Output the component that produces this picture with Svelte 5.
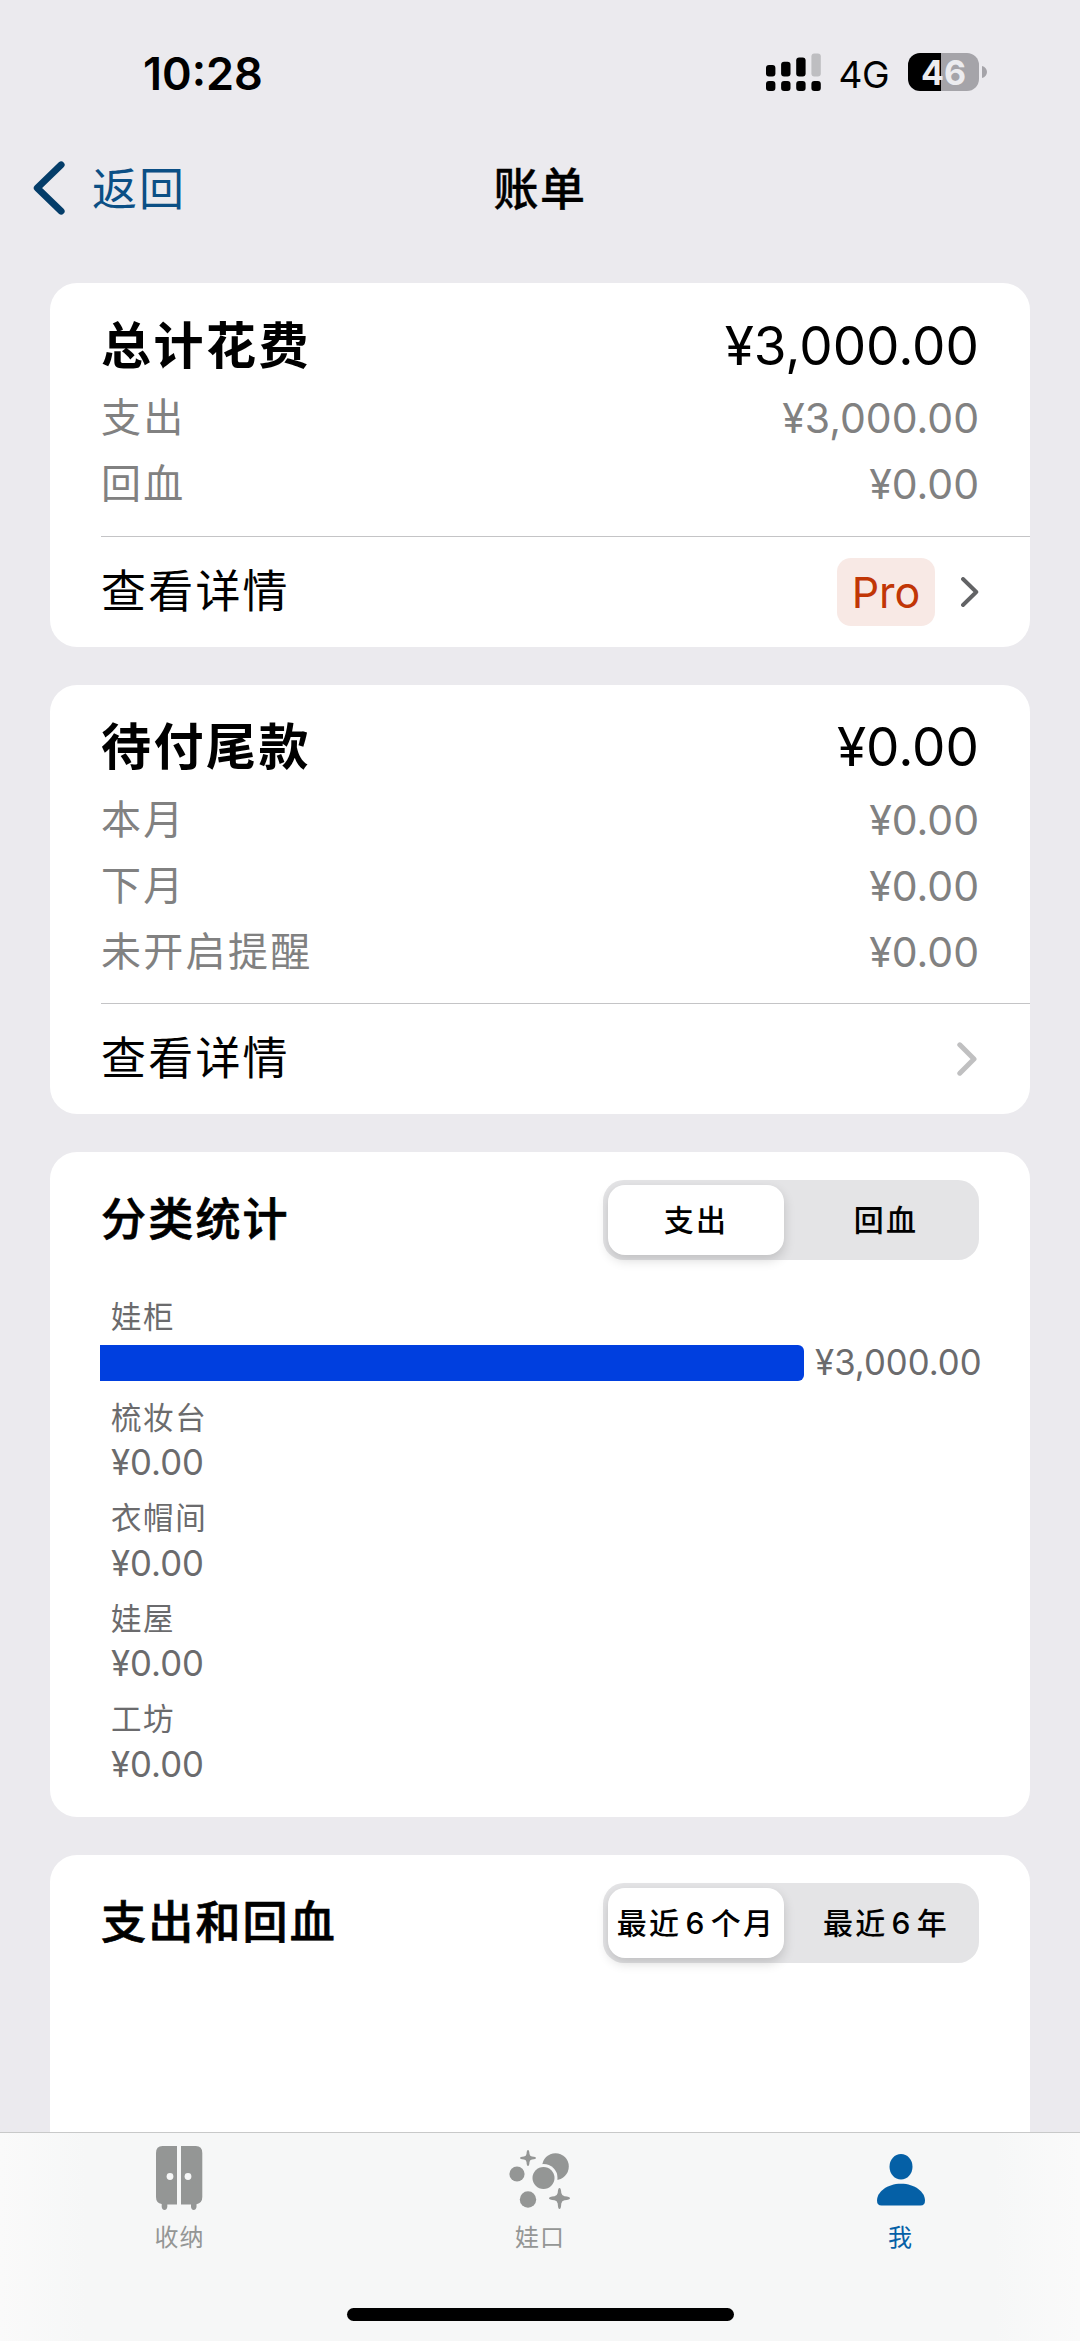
<script lang="ts">
  type Row = { label: string; amount: string };
  type Category = { name: string; amount: string; share: number };

  const spending: Row[] = [
    { label: "支出", amount: "¥3,000.00" },
    { label: "回血", amount: "¥0.00" },
  ];

  const pending: Row[] = [
    { label: "本月", amount: "¥0.00" },
    { label: "下月", amount: "¥0.00" },
    { label: "未开启提醒", amount: "¥0.00" },
  ];

  const categories: Category[] = [
    { name: "娃柜", amount: "¥3,000.00", share: 80.1 },
    { name: "梳妆台", amount: "¥0.00", share: 0 },
    { name: "衣帽间", amount: "¥0.00", share: 0 },
    { name: "娃屋", amount: "¥0.00", share: 0 },
    { name: "工坊", amount: "¥0.00", share: 0 },
  ];

  const kinds = ["支出", "回血"];
  const ranges = ["最近 6 个月", "最近 6 年"];

  let kind = $state(0);
  let range = $state(0);
  let tab = $state("me");
</script>

{#snippet segmented(options: string[], active: number, pick: (i: number) => void)}
  <div class="segmented">
    {#each options as option, i (option)}
      <button class:active={i === active} onclick={() => pick(i)}>{option}</button>
    {/each}
  </div>
{/snippet}

{#snippet rowList(rows: Row[])}
  {#each rows as row (row.label)}
    <div class="row">
      <span>{row.label}</span>
      <span class="num">{row.amount}</span>
    </div>
  {/each}
{/snippet}

<div class="screen">
  <div class="status">
    <span class="time">10:28</span>
    <div class="indicators">
      <svg class="signal" width="56" height="38" viewBox="0 0 56 38">
        <rect x="0" y="12" width="9.4" height="11.4" rx="3" />
        <rect x="15.1" y="8.7" width="9.4" height="14.7" rx="3" />
        <rect x="30.2" y="4.6" width="9.4" height="18.8" rx="3" />
        <rect x="45.4" y="0.4" width="9.4" height="23" rx="3" fill="#bebec1" />
        <rect x="0" y="28" width="9.4" height="10" rx="3" />
        <rect x="15.1" y="28" width="9.4" height="10" rx="3" />
        <rect x="30.2" y="28" width="9.4" height="10" rx="3" />
        <rect x="45.4" y="28" width="9.4" height="10" rx="3" />
      </svg>
      <span class="network">4G</span>
      <div class="battery"><span>46</span></div>
      <svg class="nub" width="5" height="12" viewBox="0 0 5 12">
        <path d="M0 0C3 .8 5 3 5 6S3 11.2 0 12Z" fill="#a5a4a9" />
      </svg>
    </div>
  </div>

  <header class="nav">
    <button class="back">
      <svg width="33" height="54" viewBox="0 0 33 54">
        <path d="M28.200 3.800 4.200 27 28.200 50.200" fill="none" stroke="#043d69" stroke-width="6.800" stroke-linecap="round" stroke-linejoin="round" />
      </svg>
      <span>返回</span>
    </button>
    <h1>账单</h1>
  </header>

  <main>
    <section class="card">
      <div class="summary">
        <div class="total">
          <h2>总计花费</h2>
          <span class="num">¥3,000.00</span>
        </div>
        {@render rowList(spending)}
      </div>
      <div class="detail">
        <span class="link">查看详情</span>
        <span class="pro">Pro</span>
        <svg class="chevron" width="18" height="30" viewBox="0 0 18 30">
          <path d="M2 2 15.300 15 2 28" fill="none" stroke="#626365" stroke-width="3.900" stroke-linecap="round" stroke-linejoin="round" />
        </svg>
      </div>
    </section>

    <section class="card">
      <div class="summary">
        <div class="total">
          <h2>待付尾款</h2>
          <span class="num">¥0.00</span>
        </div>
        {@render rowList(pending)}
      </div>
      <div class="detail">
        <span class="link">查看详情</span>
        <svg class="chevron" width="22" height="34" viewBox="0 0 22 34">
          <path d="M2.800 2.800 17 17 2.800 31.200" fill="none" stroke="#c0c0c1" stroke-width="5" stroke-linecap="round" stroke-linejoin="round" />
        </svg>
      </div>
    </section>

    <section class="card stats">
      <div class="head">
        <h3>分类统计</h3>
        {@render segmented(kinds, kind, (i) => (kind = i))}
      </div>
      {#each categories as item (item.name)}
        <div class="category">
          <div class="name">{item.name}</div>
          <div class="measure">
            {#if item.share > 0}
              <div class="bar" style="width: {item.share}%"></div>
            {/if}
            <span class="num">{item.amount}</span>
          </div>
        </div>
      {/each}
    </section>

    <section class="card trend">
      <div class="head">
        <h3>支出和回血</h3>
        {@render segmented(ranges, range, (i) => (range = i))}
      </div>
    </section>
  </main>

  <footer>
    <nav class="tabs">
      <button class:active={tab === "storage"} onclick={() => (tab = "storage")}>
        <svg width="48" height="68" viewBox="0 0 48 68">
          <path d="M6.500 0H21V58.500H11.300V61Q10.800 64 8.500 64Q6.200 64 5.700 61V58Q0 57 0 51V7Q0 0 6.500 0Z" />
          <path d="M39.800 0H25V58.500H35V61Q35.500 64 37.700 64Q40 64 40.500 61V58.300Q46.300 57 46.300 51V7Q46.300 0 39.800 0Z" />
          <circle cx="14" cy="30.500" r="3.400" fill="#f6f7f7" />
          <circle cx="32" cy="30.500" r="3.400" fill="#f6f7f7" />
        </svg>
        <span>收纳</span>
      </button>
      <button class:active={tab === "doll"} onclick={() => (tab = "doll")}>
        <svg width="62" height="68" viewBox="0 0 62 68">
          <circle cx="46.500" cy="20.500" r="13.300" />
          <circle cx="34.500" cy="32" r="14" fill="#f6f7f7" />
          <circle cx="34.500" cy="32" r="11" />
          <circle cx="8" cy="28" r="7.600" />
          <circle cx="19" cy="53.500" r="8.200" />
          <path d="M19 4Q20.300 4 20.500 8Q20.800 10.200 23 10.500Q27 10.700 27 12Q27 13.300 23 13.500Q20.800 13.800 20.500 16Q20.300 20 19 20Q17.700 20 17.500 16Q17.200 13.800 15 13.500Q11 13.300 11 12Q11 10.700 15 10.500Q17.200 10.200 17.500 8Q17.700 4 19 4Z" />
          <path d="M50.500 42Q52 42 52.300 47Q52.800 49.700 55.500 50.200Q61 50.500 61 52.300Q61 54 55.500 54.300Q52.800 54.800 52.300 57.500Q52 63 50.500 63Q49 63 48.700 57.500Q48.200 54.800 45.500 54.300Q40 54 40 52.300Q40 50.500 45.500 50.200Q48.200 49.700 48.700 47Q49 42 50.500 42Z" />
        </svg>
        <span>娃口</span>
      </button>
      <button class:active={tab === "me"} onclick={() => (tab = "me")}>
        <svg width="48" height="68" viewBox="0 0 48 68">
          <ellipse cx="24" cy="20.700" rx="11.500" ry="12.700" />
          <path d="M24 37.700C10 37.700 0 46 0 54.500Q0 59.600 4.500 59.600H43.500Q48 59.600 48 54.500C48 46 38 37.700 24 37.700Z" />
        </svg>
        <span>我</span>
      </button>
    </nav>
    <div class="home-bar"></div>
  </footer>
</div>

<style>
  :global(body) {
    margin: 0;
    background: #ebeaee;
  }

  .screen {
    width: 1080px;
    height: 2341px;
    display: flex;
    flex-direction: column;
    overflow: hidden;
    background: #ebeaee;
    color: #000;
    font-family: Inter, "Noto Sans CJK SC", sans-serif;
  }

  h1,
  h2,
  h3 {
    margin: 0;
  }

  button {
    padding: 0;
    border: 0;
    background: none;
    color: inherit;
    font: inherit;
  }

  svg {
    display: block;
  }

  .status {
    box-sizing: border-box;
    height: 144px;
    display: flex;
    justify-content: space-between;
    padding: 53px 93px 0 143px;
  }

  .time {
    height: 42px;
    line-height: 42px;
    font-size: 45px;
    font-weight: 600;
  }

  .indicators {
    height: 38px;
    display: flex;
    align-items: center;
  }

  .network {
    margin: 5px 19px 0 16px;
    font-size: 37px;
    line-height: 38px;
    letter-spacing: -0.5px;
  }

  .battery {
    width: 71px;
    height: 38px;
    border-radius: 12px;
    background: linear-gradient(90deg, #000 46%, #a5a4a9 46%);
    color: #ececef;
    font-size: 34px;
    font-weight: 700;
    line-height: 39px;
    text-align: center;
  }

  .nub {
    margin-left: 3px;
  }

  .nav {
    height: 139px;
    display: grid;
    grid-template-columns: 1fr auto 1fr;
    align-items: start;
    line-height: 91px;
  }

  .back {
    display: flex;
    align-items: center;
    gap: 26px;
    padding-left: 33px;
    color: #0b4f85;
    font-size: 45px;
    letter-spacing: 2px;
  }

  .back svg {
    margin-bottom: 3px;
  }

  h1 {
    font-size: 45px;
    font-weight: 500;
    letter-spacing: 1.5px;
    -webkit-text-stroke: 0.4px;
  }

  main {
    flex: 1;
    min-height: 0;
    overflow: hidden;
    display: flex;
    flex-direction: column;
    gap: 38px;
    padding: 0 50px;
  }

  .card {
    flex: none;
    border-radius: 27px;
    background: #fff;
  }

  .summary {
    margin-left: 51px;
    padding: 23px 51px 18px 0;
    border-bottom: 1px solid #c4c4c6;
  }

  .total,
  .row,
  .head {
    display: flex;
    align-items: center;
    justify-content: space-between;
  }

  .total {
    height: 79px;
    line-height: 76px;
    font-size: 53px;
  }

  h2 {
    font-size: 50px;
    font-weight: 600;
    letter-spacing: 2.5px;
  }

  .row {
    height: 66.3px;
    line-height: 66.3px;
    color: #818181;
    font-size: 41px;
  }

  .row span:first-child {
    font-size: 40px;
    letter-spacing: 2.3px;
  }

  .detail {
    height: 110px;
    display: flex;
    align-items: center;
    padding: 0 51px;
    line-height: 112px;
  }

  .link {
    flex: 1;
    font-size: 45px;
    letter-spacing: 2.2px;
  }

  .pro {
    width: 98px;
    height: 68px;
    margin-right: 26px;
    border-radius: 14px;
    background: #f8e9e5;
    color: #c13606;
    font-size: 43px;
    line-height: 69px;
    text-align: center;
  }

  .stats {
    height: 665px;
  }

  .trend {
    height: 500px;
  }

  .head {
    height: 80px;
    padding: 28px 51px 0 51px;
  }

  h3 {
    font-size: 45px;
    font-weight: 500;
    line-height: 80px;
    letter-spacing: 2.2px;
    -webkit-text-stroke: 0.7px;
  }

  .segmented {
    box-sizing: border-box;
    width: 376px;
    height: 80px;
    display: grid;
    grid-template-columns: 176px 176px;
    justify-content: space-between;
    padding: 5px;
    border-radius: 21px;
    background: #e4e4e6;
  }

  .segmented button {
    border-radius: 17px;
    font-size: 30px;
    font-weight: 500;
    line-height: 70px;
    letter-spacing: 2.2px;
    word-spacing: -6px;
    white-space: nowrap;
  }

  .segmented .active {
    background: #fff;
    box-shadow: 0 5px 12px rgb(0 0 0 / 0.16);
  }

  .category {
    padding: 0 51px 0 50px;
    color: #6b6b6d;
  }

  .head + .category {
    padding-top: 35px;
  }

  .name {
    height: 44px;
    margin-left: 11px;
    font-size: 30.5px;
    line-height: 44px;
    letter-spacing: 1.6px;
  }

  .measure {
    height: 56.5px;
    display: flex;
    align-items: center;
    font-size: 34.7px;
    line-height: 48px;
  }

  .measure .num {
    margin: -12px 0 0 11px;
  }

  .bar {
    flex: none;
    height: 36px;
    margin-top: -10px;
    border-radius: 0 6px 6px 0;
    background: #003fdf;
  }

  footer {
    height: 208px;
    display: flex;
    flex-direction: column;
    align-items: center;
    border-top: 1px solid #c8c9c9;
    background: linear-gradient(90deg, #fafafa, #f6f7f7 8%, #f6f7f7 92%, #fafafa);
  }

  .tabs {
    width: 1080px;
    height: 175px;
    display: grid;
    grid-template-columns: 359px 362px 359px;
  }

  .tabs button {
    display: flex;
    flex-direction: column;
    align-items: center;
    padding-top: 13px;
    color: #949695;
    font-size: 24px;
    line-height: 47px;
    letter-spacing: 1px;
  }

  .tabs button.active {
    color: #0560a6;
  }

  .tabs svg {
    fill: currentColor;
  }

  .home-bar {
    width: 387px;
    height: 13px;
    border-radius: 7px;
    background: #000;
  }
</style>
